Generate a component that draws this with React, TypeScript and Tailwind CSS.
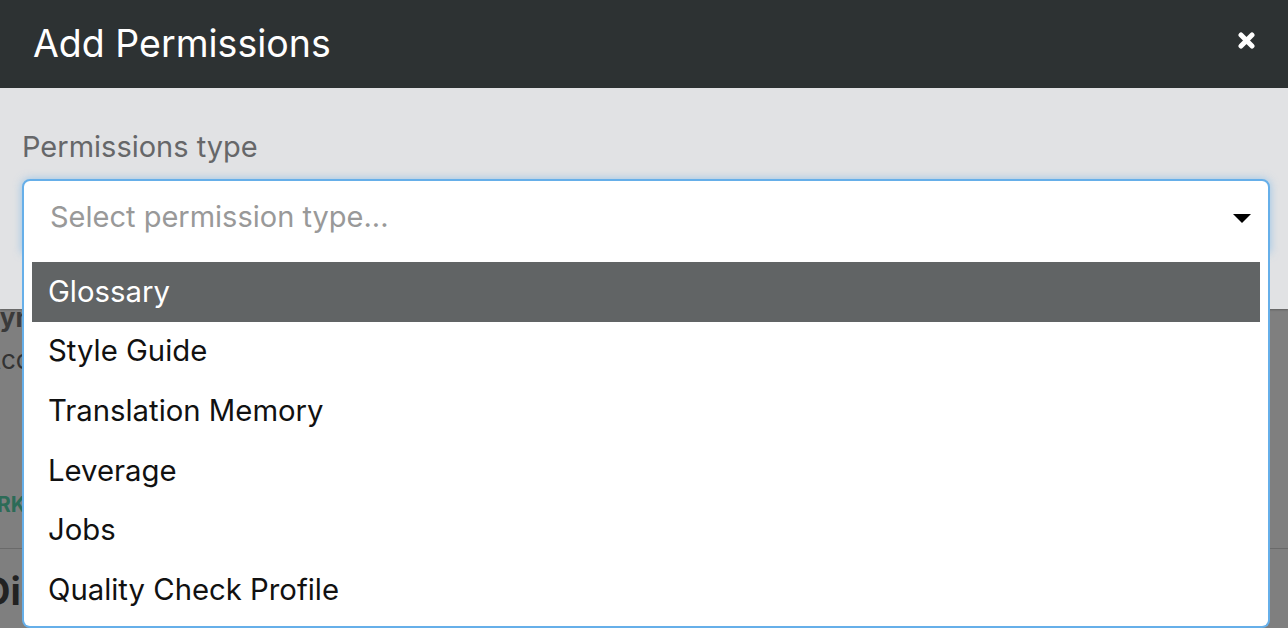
import React from "react";

const items = [
  "Glossary",
  "Style Guide",
  "Translation Memory",
  "Leverage",
  "Jobs",
  "Quality Check Profile",
];

export default function App() {
  return (
    <div
      className="relative w-[1288px] h-[628px] overflow-hidden bg-[#7f7f7f]"
      style={{ fontFamily: "Inter, Roboto, 'Liberation Sans', sans-serif" }}
    >
      {/* Modal header */}
      <div className="h-[88px] bg-[#2d3233] flex items-center justify-between pl-[33px] pr-[33px]">
        <h1 className="text-[37.5px] leading-[44px] text-white font-normal">Add Permissions</h1>
        <svg width="17" height="17" viewBox="0 0 17 17" className="mb-[7px]">
          <path d="M3 3 L14 14 M14 3 L3 14" stroke="#fff" strokeWidth="5" strokeLinecap="round" />
        </svg>
      </div>

      {/* Modal body */}
      <div className="relative z-10 h-[221px] bg-[#e1e2e4] pl-[22px] pr-[18px] pt-[41px] shadow-[0_1px_2px_rgba(0,0,0,0.25)]">
        <label className="block text-[29px] leading-[36px] text-[#666769]">Permissions type</label>
        <div className="relative mt-[14px]">
          <div className="h-[74px] rounded-t-[8px] border-2 border-[#66afe9] bg-white shadow-[0_0_8px_rgba(102,175,233,0.6)] flex items-center justify-between pl-[26px] pr-[17px]">
            <span className="text-[29px] leading-[36px] text-[#999999] pt-[2px]">Select permission type...</span>
            <svg width="18" height="9" viewBox="0 0 18 9" className="mt-[4px]">
              <path d="M0 0 L18 0 L9 9 Z" fill="#000" />
            </svg>
          </div>
          {/* Dropdown menu */}
          <div className="absolute left-0 right-0 top-[72px] h-[377px] border-2 border-t-0 border-[#66afe9] bg-white rounded-b-[8px] px-[8px] pt-[11px]">
            {items.map((it, i) => (
              <div
                key={it}
                className={
                  "h-[59.6px] flex items-center pl-[16px] text-[29.3px] leading-[36px] " +
                  (i === 0 ? "bg-[#616465] text-white" : "text-[#111111]")
                }
              >
                {it}
              </div>
            ))}
          </div>
        </div>
      </div>

      {/* Page underneath (dimmed) */}
      <div className="flex flex-col">
        <div className="-mt-[6px] ml-[-19px] text-[26px] leading-[30px] font-bold text-[#3a3a3a] whitespace-nowrap">Dynamic</div>
        <div className="mt-[12px] ml-[-17px] text-[26px] leading-[30px] text-[#333333] whitespace-nowrap">Account</div>
        <div className="mt-[118px] ml-[-3px] text-[21px] leading-[24px] font-bold text-[#2c6b57] whitespace-nowrap">RKFLOW</div>
        <div className="mt-[31px] h-px bg-[#6a6a6a] w-full" />
        <div className="mt-[20px] ml-[-17px] text-[38px] leading-[44px] font-bold text-[#222222] whitespace-nowrap">Dictionary</div>
      </div>
    </div>
  );
}
